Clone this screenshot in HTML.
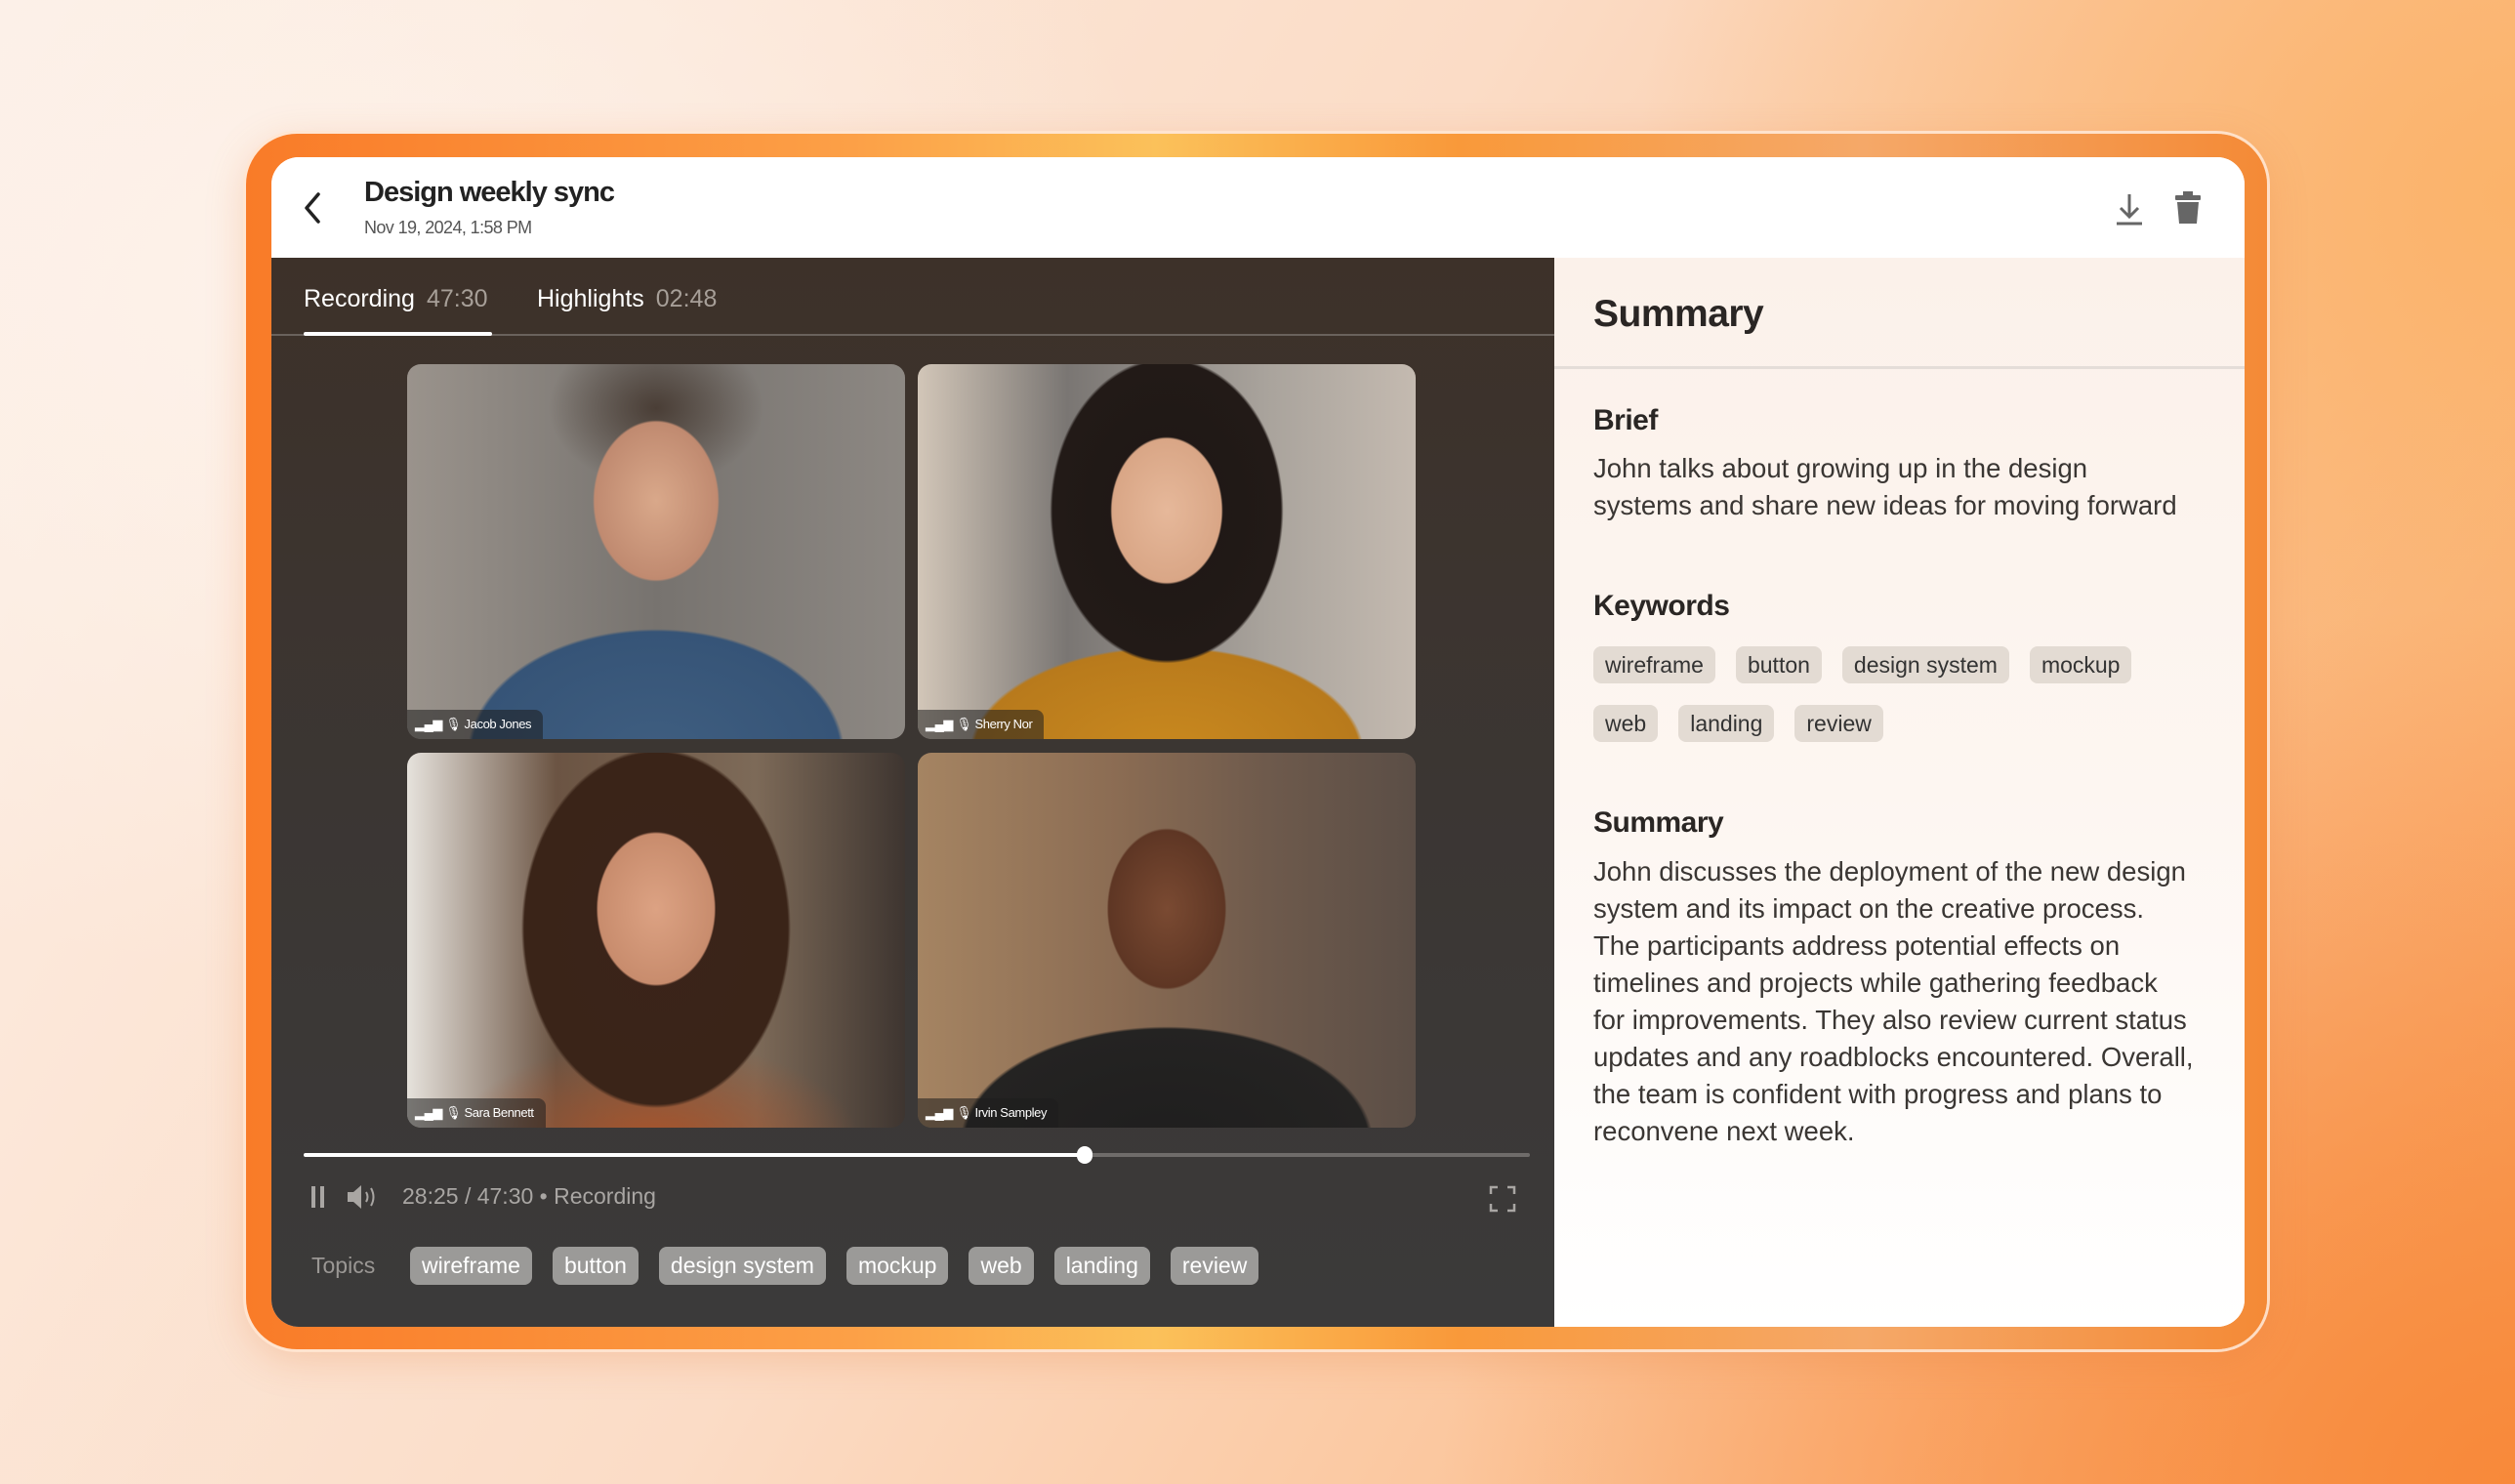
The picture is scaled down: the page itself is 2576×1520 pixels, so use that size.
<!DOCTYPE html>
<html><head><meta charset="utf-8"><style>
*{box-sizing:border-box;margin:0;padding:0}
body{width:2576px;height:1520px;overflow:hidden;font-family:"Liberation Sans",sans-serif;
background:radial-gradient(ellipse 900px 700px at 300px 300px,#fdf2ea 0%,rgba(253,240,230,0) 100%),
radial-gradient(ellipse 1100px 900px at 2576px 1520px,#f8893a 0%,rgba(248,137,58,0) 100%),
radial-gradient(ellipse 900px 800px at 2576px 200px,#fbb36a 0%,rgba(251,179,106,0) 100%),
linear-gradient(120deg,#fcefe6 0%,#fbdcc6 45%,#fbc193 75%,#f9a25e 100%);position:relative}
.frame{position:absolute;left:252px;top:137px;width:2070px;height:1245px;border-radius:52px;
background:linear-gradient(90deg,#f97b28 0%,#fca047 30%,#fbc15a 45%,#f9993a 60%,#f5a868 80%,#f48a36 100%);
box-shadow:0 0 0 3px rgba(255,230,210,.9),0 10px 40px rgba(230,120,50,.25)}
.card{position:absolute;left:278px;top:161px;width:2021px;height:1198px;border-radius:28px;overflow:hidden;background:#fff}
.hdr{position:absolute;left:0;top:0;width:100%;height:103px;background:#fff}
.title{position:absolute;left:95px;top:20px;font-size:29px;font-weight:bold;color:#222;letter-spacing:-1px}
.date{position:absolute;left:95px;top:62px;font-size:18px;color:#555;letter-spacing:-.6px}
.left{position:absolute;left:0;top:103px;width:1314px;height:1095px;background:linear-gradient(180deg,#3d3129 0%,#3b3633 50%,#3b3a3a 100%)}
.right{position:absolute;left:1314px;top:103px;width:707px;height:1095px;background:linear-gradient(180deg,#fbf1ea 0%,#fdf6f1 50%,#fff 100%)}
.tab{position:absolute;top:28px;font-size:25px;color:#fff}
.tab span{color:#a79f98;margin-left:12px}
.tile{position:absolute;width:510px;height:384px;border-radius:14px;overflow:hidden}
.lbl{position:absolute;left:0;bottom:0;height:30px;padding:0 12px 0 8px;background:rgba(30,30,30,.55);border-radius:0 8px 0 0;color:#fff;font-size:13px;line-height:30px;letter-spacing:-.4px;display:flex;align-items:center;gap:6px}
.chip{display:inline-block;background:#9b9a98;color:#fff;font-size:23px;border-radius:8px;height:39px;line-height:39px;padding:0 12px;margin-right:21px}
.kw{display:inline-block;background:#e3dbd3;color:#333;font-size:23px;border-radius:8px;height:38px;line-height:38px;padding:0 12px;margin-right:21px}
.h{position:absolute;left:40px;font-size:30px;font-weight:bold;color:#2a2624;letter-spacing:-.5px}
.p{position:absolute;left:40px;font-size:27.5px;line-height:38px;color:#3a3633;white-space:nowrap}
</style></head><body>
<div class="frame"></div>
<div class="card">
 <div class="hdr">
  <svg style="position:absolute;left:30px;top:34px" width="24" height="36" viewBox="0 0 24 36"><path d="M18 4 L6 18 L18 32" fill="none" stroke="#222" stroke-width="3.5" stroke-linecap="round" stroke-linejoin="round"/></svg>
  <div class="title">Design weekly sync</div>
  <div class="date">Nov 19, 2024, 1:58 PM</div>
  <svg style="position:absolute;left:1886px;top:35px" width="34" height="36" viewBox="0 0 34 36"><path d="M17 3 V26 M8 17 L17 26 L26 17 M4 33 H30" fill="none" stroke="#666" stroke-width="3"/></svg>
  <svg style="position:absolute;left:1948px;top:34px" width="30" height="36" viewBox="0 0 30 36"><rect x="10" y="1" width="10" height="4" fill="#666"/><rect x="2" y="5" width="26" height="5" rx="1" fill="#666"/><path d="M4 12 H26 L24 34 H6 Z" fill="#666"/></svg>
 </div>
 <div class="left">
  <div class="tab" style="left:33px">Recording<span>47:30</span></div>
  <div class="tab" style="left:272px">Highlights<span>02:48</span></div>
  <div style="position:absolute;left:0;top:78px;width:1314px;height:2px;background:#6a625c"></div>
  <div style="position:absolute;left:33px;top:76px;width:193px;height:4px;background:#fff;border-radius:2px"></div>

  <div class="tile" style="left:139px;top:109px;background:radial-gradient(ellipse 90px 115px at 255px 140px,#d9a88a 0%,#c08a70 70%,rgba(0,0,0,0) 72%),radial-gradient(ellipse 210px 140px at 255px 400px,#3f5e80 0%,#365477 90%,rgba(0,0,0,0) 92%),radial-gradient(ellipse 110px 80px at 255px 45px,#4a3e36 0%,rgba(0,0,0,0) 100%),linear-gradient(90deg,#9a938c,#77736f 50%,#8d8883)">
   <div class="lbl">▂▄▆ 🎙 Jacob Jones</div></div>
  <div class="tile" style="left:662px;top:109px;background:radial-gradient(ellipse 80px 105px at 255px 150px,#e6b89a 0%,#d9a686 70%,rgba(0,0,0,0) 72%),radial-gradient(ellipse 130px 170px at 255px 150px,#1d1715 0%,#221a17 90%,rgba(0,0,0,0) 92%),radial-gradient(ellipse 220px 120px at 255px 400px,#c9891f 0%,#b87a1c 90%,rgba(0,0,0,0) 92%),linear-gradient(90deg,#d2c6b8,#7a7673 30%,#a9a39c 70%,#c4bab0)">
   <div class="lbl">▂▄▆ 🎙 Sherry Nor</div></div>
  <div class="tile" style="left:139px;top:507px;background:radial-gradient(ellipse 85px 110px at 255px 160px,#dca283 0%,#c88c6d 70%,rgba(0,0,0,0) 72%),radial-gradient(ellipse 150px 200px at 255px 180px,#3b231a 0%,#3a2418 90%,rgba(0,0,0,0) 92%),radial-gradient(ellipse 220px 110px at 255px 400px,#a9532a 0%,rgba(0,0,0,0) 95%),linear-gradient(90deg,#e6e2dc,#6b5443 30%,#7d6a58 70%,#3e3530)">
   <div class="lbl">▂▄▆ 🎙 Sara Bennett</div></div>
  <div class="tile" style="left:662px;top:507px;background:radial-gradient(ellipse 85px 115px at 255px 160px,#7a4a32 0%,#5e3624 70%,rgba(0,0,0,0) 72%),radial-gradient(ellipse 230px 130px at 255px 400px,#1f1e1e 0%,#242322 90%,rgba(0,0,0,0) 92%),linear-gradient(90deg,#a58462,#8b6c53 40%,#6e5a4c 70%,#5b4e46)">
   <div class="lbl">▂▄▆ 🎙 Irvin Sampley</div></div>

  <div style="position:absolute;left:33px;top:917px;width:1256px;height:4px;background:#6f6c6a;border-radius:2px"></div>
  <div style="position:absolute;left:33px;top:917px;width:800px;height:4px;background:#fff;border-radius:2px"></div>
  <div style="position:absolute;left:825px;top:910px;width:16px;height:18px;background:#fff;border-radius:8px"></div>

  <svg style="position:absolute;left:38px;top:949px" width="20" height="26" viewBox="0 0 20 26"><rect x="3" y="2" width="4" height="22" fill="#a9a6a3"/><rect x="12" y="2" width="4" height="22" fill="#a9a6a3"/></svg>
  <svg style="position:absolute;left:76px;top:948px" width="36" height="28" viewBox="0 0 36 28"><path d="M2 9 H8 L16 2 V26 L8 19 H2 Z" fill="#a9a6a3"/><path d="M21 9 Q24 14 21 19 M26 5 Q31 14 26 23" fill="none" stroke="#a9a6a3" stroke-width="2"/></svg>
  <div style="position:absolute;left:134px;top:948px;font-size:23px;color:#a9a6a3">28:25 / 47:30 • Recording</div>
  <svg style="position:absolute;left:1247px;top:950px" width="28" height="28" viewBox="0 0 28 28"><path d="M2 9 V2 H9 M19 2 H26 V9 M26 19 V26 H19 M9 26 H2 V19" fill="none" stroke="#a9a6a3" stroke-width="2.5"/></svg>

  <div style="position:absolute;left:41px;top:1019px;font-size:23px;color:#9a9794">Topics</div>
  <div style="position:absolute;left:142px;top:1013px;white-space:nowrap;font-size:0">
   <span class="chip">wireframe</span><span class="chip">button</span><span class="chip">design system</span><span class="chip">mockup</span><span class="chip">web</span><span class="chip">landing</span><span class="chip">review</span>
  </div>
 </div>
 <div class="right">
  <div class="h" style="top:36px;font-size:39px">Summary</div>
  <div style="position:absolute;left:0;top:111px;width:707px;height:3px;background:#e4ddd8"></div>
  <div class="h" style="top:150px">Brief</div>
  <div class="p" style="top:197px">John talks about growing up in the design<br>systems and share new ideas for moving forward</div>
  <div class="h" style="top:340px">Keywords</div>
  <div style="position:absolute;left:40px;top:398px;font-size:0;width:660px">
   <span class="kw">wireframe</span><span class="kw">button</span><span class="kw">design system</span><span class="kw">mockup</span><br>
   <div style="height:22px"></div>
   <span class="kw">web</span><span class="kw">landing</span><span class="kw">review</span>
  </div>
  <div class="h" style="top:562px">Summary</div>
  <div class="p" style="top:610px">John discusses the deployment of the new design<br>system and its impact on the creative process.<br>The participants address potential effects on<br>timelines and projects while gathering feedback<br>for improvements. They also review current status<br>updates and any roadblocks encountered. Overall,<br>the team is confident with progress and plans to<br>reconvene next week.</div>
 </div>
</div>
</body></html>
